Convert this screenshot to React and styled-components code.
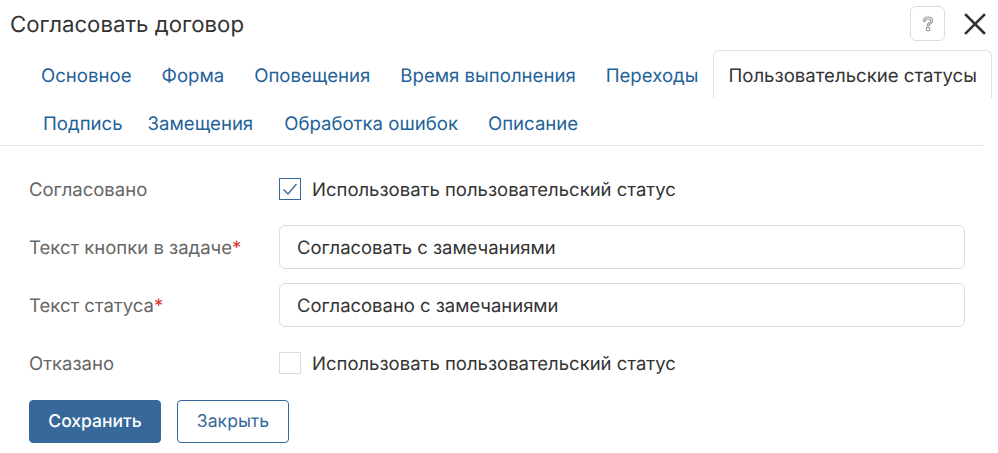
import React from "react";
import styled, { createGlobalStyle } from "styled-components";

const Global = createGlobalStyle`
  html, body { margin: 0; padding: 0; background: #fff; }
  body { font-family: Inter, "Noto Sans", sans-serif; width: 998px; height: 453px; overflow: hidden; text-rendering: geometricPrecision; }
`;
const Dialog = styled.div`width: 998px; height: 453px; display: flex; flex-direction: column; box-sizing: border-box;`;
const Header = styled.header`height: 50px; display: flex; align-items: center; justify-content: space-between; padding: 0 11px 3px 10px; box-sizing: border-box;`;
const Title = styled.h1`margin: 0; padding-top: 1px; font-size: 22.2px; font-weight: 400; color: #333; line-height: 47px;`;
const HeaderActions = styled.div`display: flex; align-items: center; gap: 18px;`;
const HelpButton = styled.button`width: 35px; height: 35px; padding: 0; border: 1px solid #dcdcdc; border-radius: 6px; background: #fff; display: flex; align-items: center; justify-content: center;`;
const CloseButton = styled.button`width: 24px; height: 24px; padding: 0; border: 0; background: none; display: flex; align-items: center; justify-content: center;`;
const Tabs = styled.nav`width: 983px; box-sizing: border-box; border-bottom: 1px solid #e2e2e2; height: 96px; padding-left: 26px;`;
const TabRow = styled.div`display: flex; height: 48px; padding-left: ${p => p.$indent || 0}px;`;
const Tab = styled.a`
  box-sizing: border-box; height: 48px; padding: 3px 15px 0; margin-left: ${p => p.$shift || 0}px;
  display: flex; align-items: center; font-size: 18.6px; white-space: nowrap;
  color: ${p => (p.$active ? "#333" : "#1f6299")};
  ${p => p.$active && "border: 1px solid #e2e2e2; border-bottom: 0; border-radius: 6px 6px 0 0; padding: 3px 14px 0; background:#fff;"}
`;
const Form = styled.form`padding: 14px 33px 0 29px; display: flex; flex-direction: column;`;
const Row = styled.div`display: grid; grid-template-columns: 250px 1fr; align-items: center; height: 58px;`;
const Label = styled.label`font-size: 18.5px; color: #666; padding-top: 1px;`;
const Required = styled.span`color: #d9352c;`;
const CheckRow = styled.div`display: flex; align-items: center; gap: 11px; font-size: 18.5px; color: #333;`;
const CheckText = styled.span`padding-top: 2px;`;
const Box = styled.span`
  width: 22px; height: 22px; box-sizing: border-box; display: flex; align-items: center; justify-content: center; background: #fff;
  border: 1px solid ${p => (p.$checked ? "#366899" : "#dcdcdc")};
`;
const Input = styled.input`
  width: 686px; height: 44px; box-sizing: border-box; border: 1px solid #dcdcdc; border-radius: 6px; padding: 2px 17px 0;
  font: 18.45px Inter, sans-serif; color: #333; background: #fff; outline: none; text-rendering: geometricPrecision;
`;
const Actions = styled.div`display: flex; gap: 16px; margin-top: 8px;`;
const Primary = styled.button`width: 132px; height: 43px; border: 1px solid #366899; border-radius: 4px; background: #366899; color: #fff; font: 500 17.5px Inter, sans-serif; text-rendering: geometricPrecision;`;
const Secondary = styled.button`width: 112px; height: 43px; border: 1px solid #366899; border-radius: 4px; background: #fff; color: #366899; font: 17.6px Inter, sans-serif; text-rendering: geometricPrecision;`;

export default function App() {
  return (
    <Dialog>
      <Global />
      <Header>
        <Title>Согласовать договор</Title>
        <HeaderActions>
          <HelpButton aria-label="Справка">
            <svg width="12" height="16" viewBox="0 0 12 16" fill="none" stroke="#9a9a9a" strokeWidth="1.2">
              <path d="M1.5 5.2C1.5 2.6 3.5 1 6 1s4.5 1.5 4.5 3.7c0 1.9-1.4 2.7-2.5 3.4-.9.5-1.2.9-1.2 1.6H5.2c0-1.5.7-2.2 1.8-2.9.9-.6 1.6-1 1.6-2 0-1-.9-1.8-2.6-1.8S3.4 3.9 3.4 5.2H1.5z" />
              <circle cx="6" cy="13" r="1.8" />
            </svg>
          </HelpButton>
          <CloseButton aria-label="Закрыть">
            <svg width="22" height="22" viewBox="0 0 22 22" stroke="#333" strokeWidth="2.6" strokeLinecap="square">
              <path d="M2 2l18 18M20 2L2 20" />
            </svg>
          </CloseButton>
        </HeaderActions>
      </Header>
      <Tabs>
        <TabRow>
          <Tab>Основное</Tab>
          <Tab>Форма</Tab>
          <Tab>Оповещения</Tab>
          <Tab>Время выполнения</Tab>
          <Tab>Переходы</Tab>
          <Tab $active>Пользовательские статусы</Tab>
        </TabRow>
        <TabRow $indent={2}>
          <Tab>Подпись</Tab>
          <Tab $shift={-5}>Замещения</Tab>
          <Tab $shift={1}>Обработка ошибок</Tab>
          <Tab>Описание</Tab>
        </TabRow>
      </Tabs>
      <Form>
        <Row>
          <Label>Согласовано</Label>
          <CheckRow>
            <Box $checked>
              <svg width="16" height="14" viewBox="0 0 16 14" fill="none" stroke="#366899" strokeWidth="1.3"><path d="M1.5 7.5l4.5 4.5L14.5 2" /></svg>
            </Box>
            <CheckText>Использовать пользовательский статус</CheckText>
          </CheckRow>
        </Row>
        <Row>
          <Label>Текст кнопки в задаче<Required>*</Required></Label>
          <Input defaultValue="Согласовать с замечаниями" />
        </Row>
        <Row>
          <Label>Текст статуса<Required>*</Required></Label>
          <Input defaultValue="Согласовано с замечаниями" />
        </Row>
        <Row>
          <Label>Отказано</Label>
          <CheckRow>
            <Box />
            <CheckText>Использовать пользовательский статус</CheckText>
          </CheckRow>
        </Row>
        <Actions>
          <Primary type="button">Сохранить</Primary>
          <Secondary type="button">Закрыть</Secondary>
        </Actions>
      </Form>
    </Dialog>
  );
}
